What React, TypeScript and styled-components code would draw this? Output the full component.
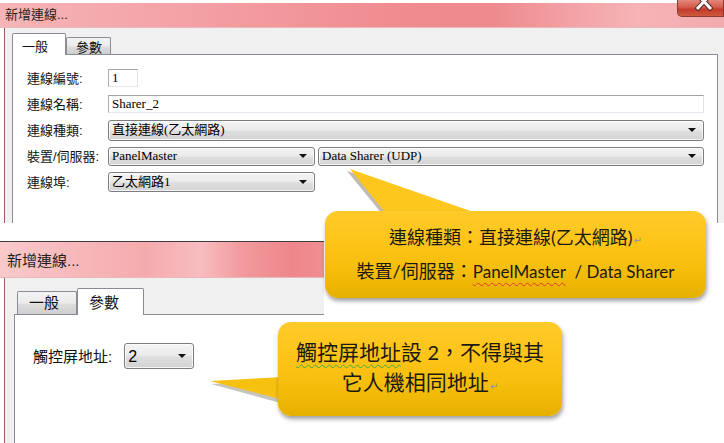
import React from 'react';
import styled, { createGlobalStyle } from 'styled-components';

const GlobalStyle = createGlobalStyle`
  html, body {
    margin: 0;
    padding: 0;
    background: #ffffff;
    overflow: hidden;
  }
  body {
    font-family: "Liberation Sans", "Noto Sans CJK TC", sans-serif;
  }
`;

const CJK = `"Liberation Sans", "Noto Sans CJK TC", sans-serif`;
const SERIF = `"Liberation Serif", "Noto Sans CJK TC", serif`;

const Canvas = styled.div`
  position: relative;
  width: 724px;
  height: 443px;
  overflow: hidden;
  background: #ffffff;
`;

/* ---------- window chrome ---------- */

const Window = styled.div<{ $width?: number; $height: number }>`
  display: flex;
  flex-direction: column;
  width: ${p => (p.$width ? `${p.$width}px` : '100%')};
  height: ${p => p.$height}px;
  box-sizing: border-box;
`;

const TitleBar = styled.div<{ $large?: boolean }>`
  display: flex;
  align-items: flex-start;
  height: ${p => (p.$large ? 35 : 24)}px;
  margin-top: ${p => (p.$large ? 0 : 3)}px;
  border-top: ${p => (p.$large ? '1px solid #3d3d3d' : 'none')};
  border-bottom: 1px solid #e8b8ba;
  padding-left: ${p => (p.$large ? 7 : 5)}px;
  background: ${p =>
    p.$large
      ? 'linear-gradient(90deg, #f9c9ca 0%, #f7b9bb 22%, #f5abae 45%, #f8bdbf 62%, #f19a9d 75%, #ee878b 90%, #ef8e92 100%)'
      : 'linear-gradient(90deg, #f6b5b8 0%, #f4a7aa 18%, #f2989c 38%, #f08c90 55%, #ee8a8e 68%, #f2a0a3 78%, #f6b4b6 88%, #f2aaad 100%)'};
`;

const TitleText = styled.span<{ $large?: boolean }>`
  margin-top: ${p => (p.$large ? 10 : 4)}px;
  font-family: ${CJK};
  font-size: ${p => (p.$large ? 15 : 13)}px;
  line-height: ${p => (p.$large ? 18 : 16)}px;
  color: #1f1f1f;
`;

const CloseButton = styled.div`
  position: relative;
  margin-left: auto;
  margin-top: -3px;
  width: 47px;
  height: 17px;
  box-sizing: border-box;
  border: 1px solid #8c3a33;
  border-top: none;
  border-radius: 0 0 0 5px;
  background: linear-gradient(#e3877c 0%, #d45b4d 45%, #c23b2c 60%, #cf5a3e 100%);
  overflow: hidden;
`;

const WindowBody = styled.div<{ $inset: number; $padTop: number; $padRight: number }>`
  flex: 1;
  display: flex;
  flex-direction: column;
  margin-left: 4px;
  border-left: 1px solid #a35b5c;
  background: #f0f0f0;
  padding: ${p => p.$padTop}px ${p => p.$padRight}px 0 ${p => p.$inset}px;
  min-height: 0;
`;

const TabStrip = styled.div<{ $height: number; $indent?: number }>`
  display: flex;
  align-items: flex-end;
  height: ${p => p.$height}px;
  padding-left: ${p => p.$indent ?? 0}px;
`;

const Tab = styled.div<{ $active?: boolean; $width: number; $height: number; $size: number }>`
  position: relative;
  z-index: ${p => (p.$active ? 2 : 1)};
  width: ${p => p.$width}px;
  height: ${p => p.$height}px;
  box-sizing: border-box;
  margin-bottom: ${p => (p.$active ? -1 : 0)}px;
  border: 1px solid #898c95;
  border-bottom: none;
  border-radius: 2px 2px 0 0;
  background: ${p => (p.$active ? '#ffffff' : 'linear-gradient(#f3f3f3 0%, #ebebeb 50%, #dddddd 55%, #cfcfcf 100%)')};
  padding: ${p => (p.$active ? 5 : 2)}px 0 0 ${p => (p.$size > 13 ? 11 : 9)}px;
  font-family: ${CJK};
  font-size: ${p => p.$size}px;
  line-height: ${p => p.$size + 3}px;
  color: #111;
`;

const Panel = styled.div<{ $open?: boolean; $padTop: number; $padLeft: number }>`
  flex: 1;
  background: #ffffff;
  border: 1px solid #898c95;
  border-bottom: none;
  border-right: ${p => (p.$open ? 'none' : '1px solid #898c95')};
  padding: ${p => p.$padTop}px 13px 0 ${p => p.$padLeft}px;
`;

/* ---------- form parts ---------- */

const FormGrid = styled.div`
  display: grid;
  grid-template-columns: 81px 1fr;
  grid-auto-rows: 26px;
  align-items: center;
`;

const Label = styled.span<{ $size?: number }>`
  font-family: ${CJK};
  font-size: ${p => p.$size ?? 13}px;
  line-height: ${p => (p.$size ?? 13) + 4}px;
  color: #111;
  white-space: nowrap;
`;

const TextBox = styled.div<{ $width?: number }>`
  display: flex;
  align-items: center;
  height: 18px;
  box-sizing: border-box;
  width: ${p => (p.$width ? `${p.$width}px` : 'auto')};
  border: 1px solid #abadb3;
  border-top-color: #a0a2a8;
  border-right-color: #e2e3ea;
  border-bottom-color: #e3e9ef;
  background: #ffffff;
  padding-left: 3px;
  font-family: ${SERIF};
  font-size: 13px;
  color: #000;
`;

const ComboRow = styled.div`
  display: flex;
  gap: 3px;
`;

const Combo = styled.div<{ $width?: number; $height?: number; $size?: number; $sans?: boolean }>`
  display: flex;
  align-items: center;
  justify-content: space-between;
  ${p => (p.$width ? `width: ${p.$width}px; flex: none;` : 'flex: 1;')}
  height: ${p => p.$height ?? 20}px;
  box-sizing: border-box;
  border: 1px solid #7b7d82;
  border-radius: 3px;
  background: linear-gradient(#f4f4f4 0%, #ececec 45%, #dedede 55%, #d3d3d3 100%);
  box-shadow: inset 0 0 0 1px rgba(255, 255, 255, 0.75);
  padding: 0 7px 0 3px;
  font-family: ${p => (p.$sans ? CJK : SERIF)};
  font-size: ${p => p.$size ?? 13}px;
  line-height: ${p => (p.$size ?? 13) + 3}px;
  color: #000;
  white-space: nowrap;
`;

const Arrow = styled.span`
  width: 0;
  height: 0;
  border-left: 4px solid transparent;
  border-right: 4px solid transparent;
  border-top: 4px solid #111;
`;

const AddressRow = styled.div`
  display: flex;
  align-items: center;
  gap: 12px;
`;

/* ---------- callouts ---------- */

const CalloutWrap = styled.div<{ $x: number; $y: number; $w: number; $h: number }>`
  position: absolute;
  left: ${p => p.$x}px;
  top: ${p => p.$y}px;
  width: ${p => p.$w}px;
  height: ${p => p.$h}px;
  z-index: 5;
`;

const Tail = styled.svg`
  position: absolute;
  overflow: visible;
`;

const Bubble = styled.div<{ $size: number; $lh: number }>`
  position: relative;
  display: flex;
  flex-direction: column;
  align-items: center;
  justify-content: center;
  height: 100%;
  box-sizing: border-box;
  border-radius: 13px;
  background: linear-gradient(#ffca2a 0%, #fdc417 40%, #f3bb08 75%, #e6b000 100%);
  box-shadow: 1px 3px 4px rgba(0, 0, 0, 0.38);
  font-family: "Lato", "Noto Sans CJK TC", sans-serif;
  font-size: ${p => p.$size}px;
  line-height: ${p => p.$lh}px;
  color: #1c1a10;
  white-space: nowrap;
`;

const Line = styled.div``;

const Latin = styled.span<{ $size?: number }>`
  font-family: "Lato", sans-serif;
  font-size: ${p => p.$size ?? 17}px;
`;

const Wavy = styled.span<{ $color: string }>`
  text-decoration: underline wavy ${p => p.$color};
  text-decoration-thickness: 1px;
  text-underline-offset: 4px;
`;

const ParaMark = styled.span`
  font-family: "DejaVu Sans", sans-serif;
  font-size: 10px;
  color: #8494b5;
  margin-left: 1px;
`;

const App = () => {
  return (
    <Canvas>
      <GlobalStyle />

      <Window $height={223}>
        <TitleBar>
          <TitleText>新增連線...</TitleText>
          <CloseButton>
            <svg width="47" height="17" viewBox="0 0 47 17">
              <g strokeLinecap="square">
                <path d="M20 -5 L32 8 M32 -5 L20 8" stroke="#5a2a24" strokeWidth="5" />
                <path d="M20 -5 L32 8 M32 -5 L20 8" stroke="#ffffff" strokeWidth="3" />
              </g>
            </svg>
          </CloseButton>
        </TitleBar>
        <WindowBody $inset={7} $padTop={5} $padRight={6}>
          <TabStrip $height={21}>
            <Tab $active $width={54} $height={22} $size={13}>一般</Tab>
            <Tab $width={45} $height={17} $size={13}>參數</Tab>
          </TabStrip>
          <Panel $padTop={10} $padLeft={14}>
            <FormGrid>
              <Label>連線編號:</Label>
              <TextBox $width={30}>1</TextBox>

              <Label>連線名稱:</Label>
              <TextBox>Sharer_2</TextBox>

              <Label>連線種類:</Label>
              <Combo $height={21}>
                直接連線(乙太網路)
                <Arrow />
              </Combo>

              <Label>裝置/伺服器:</Label>
              <ComboRow>
                <Combo $width={207} $height={19}>
                  PanelMaster
                  <Arrow />
                </Combo>
                <Combo $height={19}>
                  Data Sharer (UDP)
                  <Arrow />
                </Combo>
              </ComboRow>

              <Label>連線埠:</Label>
              <ComboRow>
                <Combo $width={207}>
                  乙太網路1
                  <Arrow />
                </Combo>
              </ComboRow>
            </FormGrid>
          </Panel>
        </WindowBody>
      </Window>

      <Window $width={324} $height={202} style={{ marginTop: 18 }}>
        <TitleBar $large>
          <TitleText $large>新增連線...</TitleText>
        </TitleBar>
        <WindowBody $inset={9} $padTop={10} $padRight={0}>
          <TabStrip $height={26} $indent={3}>
            <Tab $width={60} $height={23} $size={15}>一般</Tab>
            <Tab $active $width={67} $height={27} $size={15}>參數</Tab>
          </TabStrip>
          <Panel $open $padTop={28} $padLeft={18}>
            <AddressRow>
              <Label $size={15}>觸控屏地址:</Label>
              <Combo $width={70} $height={26} $size={16} $sans>
                2
                <Arrow />
              </Combo>
            </AddressRow>
          </Panel>
        </WindowBody>
      </Window>

      <CalloutWrap $x={325} $y={211} $w={381} $h={87}>
        <Tail width="170" height="50" viewBox="0 0 170 50" style={{ left: 0, top: -44 }}>
          <polygon points="22,4 58,48 154,48" fill="rgba(70,60,40,0.35)" />
          <polygon points="25,2 62,48 157,48" fill="#fec71d" />
        </Tail>
        <Bubble $size={18} $lh={31}>
          <Line>
            連線種類：直接連線(乙太網路)<ParaMark>↵</ParaMark>
          </Line>
          <Line>
            裝置/伺服器：<Latin><Wavy $color="#e23b3b">PanelMaster</Wavy>&nbsp; / Data Sharer</Latin>
          </Line>
        </Bubble>
      </CalloutWrap>

      <CalloutWrap $x={278} $y={322} $w={284} $h={94}>
        <Tail width="80" height="40" viewBox="0 0 80 40" style={{ left: -70, top: 50 }}>
          <polygon points="3,12 76,8 76,32" fill="rgba(70,60,40,0.3)" />
          <polygon points="2,9 76,5 76,28" fill="#f7c10f" />
        </Tail>
        <Bubble $size={21} $lh={30}>
          <Line>
            <Wavy $color="#3fae3f">觸控屏地址</Wavy>設 <Latin $size={20}>2</Latin>，不得與其
          </Line>
          <Line>
            它人機相同地址<ParaMark>↵</ParaMark>
          </Line>
        </Bubble>
      </CalloutWrap>
    </Canvas>
  );
};

export default App;
